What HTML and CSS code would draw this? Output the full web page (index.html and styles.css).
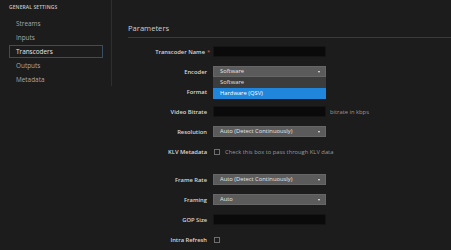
FILE: index.html
```html
<!DOCTYPE html>
<html>
<head>
<meta charset="utf-8">
<link rel="stylesheet" href="styles.css">
</head>
<body>
<div class="app">
  <aside class="sidebar">
    <div class="side-title">General Settings</div>
    <nav class="nav">
      <div class="nav-item">Streams</div>
      <div class="nav-item">Inputs</div>
      <div class="nav-item active">Transcoders</div>
      <div class="nav-item">Outputs</div>
      <div class="nav-item">Metadata</div>
    </nav>
  </aside>
  <main class="main">
    <h2 class="section-title">Parameters</h2>
    <div class="form">
      <div class="row">
        <label class="label">Transcoder Name<span class="req">*</span></label>
        <div class="input"></div>
      </div>
      <div class="row">
        <label class="label">Encoder</label>
        <div class="select-wrap">
          <div class="select">Software<span class="arrow"></span></div>
          <div class="menu">
            <div class="option">Software</div>
            <div class="option selected">Hardware (QSV)</div>
          </div>
        </div>
      </div>
      <div class="row">
        <label class="label">Format</label>
        <div class="select"><span class="arrow"></span></div>
      </div>
      <div class="row">
        <label class="label">Video Bitrate</label>
        <div class="input"></div>
        <span class="help">bitrate in kbps</span>
      </div>
      <div class="row">
        <label class="label">Resolution</label>
        <div class="select">Auto (Detect Continuously)<span class="arrow"></span></div>
      </div>
      <div class="row">
        <label class="label">KLV Metadata</label>
        <div class="check-wrap"><span class="checkbox"></span><span class="help">Check this box to pass through KLV data</span></div>
      </div>
      <div class="row spaced">
        <label class="label">Frame Rate</label>
        <div class="select">Auto (Detect Continuously)<span class="arrow"></span></div>
      </div>
      <div class="row">
        <label class="label">Framing</label>
        <div class="select">Auto<span class="arrow"></span></div>
      </div>
      <div class="row">
        <label class="label">GOP Size</label>
        <div class="input"></div>
      </div>
      <div class="row">
        <label class="label">Intra Refresh</label>
        <div class="check-wrap"><span class="checkbox"></span></div>
      </div>
    </div>
  </main>
</div>
</body>
</html>
```
FILE: styles.css
```css
* { box-sizing: border-box; }
html, body { margin: 0; padding: 0; }
body {
  background: #1c1c1c;
  font-family: "Open Sans", "Liberation Sans", sans-serif;
  color: #d0d0d0;
  width: 451px;
  height: 250px;
  overflow: hidden;
}
.app { display: flex; align-items: flex-start; }
.sidebar {
  width: 112px;
  height: 86px;
  border-right: 1px solid #2e2e2e;
  padding: 4px 8px 0 9px;
  flex-shrink: 0;
}
.side-title {
  font-size: 5px;
  font-weight: 600;
  text-transform: uppercase;
  color: #c8c8c8;
  line-height: 7px;
  letter-spacing: 0.1px;
}
.nav { display: flex; flex-direction: column; margin-top: 6px; gap: 1px; }
.nav-item {
  height: 13px;
  line-height: 12px;
  font-size: 6.4px;
  color: #a8a8a8;
  padding-left: 6px;
  border: 1px solid transparent;
}
.nav-item.active {
  color: #e6e6e6;
  border-color: #3b4d60;
}
.main { flex: 1; padding: 22px 0 0 16px; }
.section-title {
  margin: 0;
  font-size: 7.6px;
  font-weight: 400;
  color: #cfcfcf;
  line-height: 12px;
  padding-bottom: 3px;
  border-bottom: 1px solid #3a3a3a;
}
.form { display: flex; flex-direction: column; gap: 9px; margin-top: 8px; }
.row { display: flex; align-items: center; height: 11px; }
.row.spaced { margin-top: 8px; }
.label {
  width: 79px;
  margin-right: 6px;
  text-align: right;
  font-size: 5.8px;
  font-weight: 600;
  color: #d8d8d8;
  white-space: nowrap;
}
.req { display: inline-block; width: 0; margin-left: 2px; color: #d9534f; overflow: visible; }
.input {
  width: 113px;
  height: 11px;
  background: #0a0a0a;
  border: 1px solid #151515;
}
.select-wrap { position: relative; }
.select {
  position: relative;
  width: 113px;
  height: 11px;
  background: #5b5b5b;
  border: 1px solid #666;
  color: #e4e4e4;
  font-size: 5.8px;
  line-height: 9px;
  padding-left: 6px;
}
.arrow {
  position: absolute;
  right: 5px;
  top: 4px;
  width: 0; height: 0;
  border-left: 1.5px solid transparent;
  border-right: 1.5px solid transparent;
  border-top: 2px solid #eee;
}
.menu {
  position: absolute;
  left: 0;
  top: 11px;
  width: 113px;
  z-index: 2;
}
.option {
  height: 11px;
  line-height: 11px;
  font-size: 5.8px;
  padding-left: 7px;
  background: #3c3c3c;
  color: #e0e0e0;
}
.option.selected { background: #1f86dc; color: #fff; }
.help { font-size: 5.8px; color: #9a9a9a; margin-left: 4px; white-space: nowrap; }
.check-wrap { display: flex; align-items: center; }
.checkbox {
  width: 6px;
  height: 6px;
  border: 1px solid #6e6e6e;
  margin-left: 1px;
  display: inline-block;
}
.check-wrap .help { margin-left: 5px; }
```
